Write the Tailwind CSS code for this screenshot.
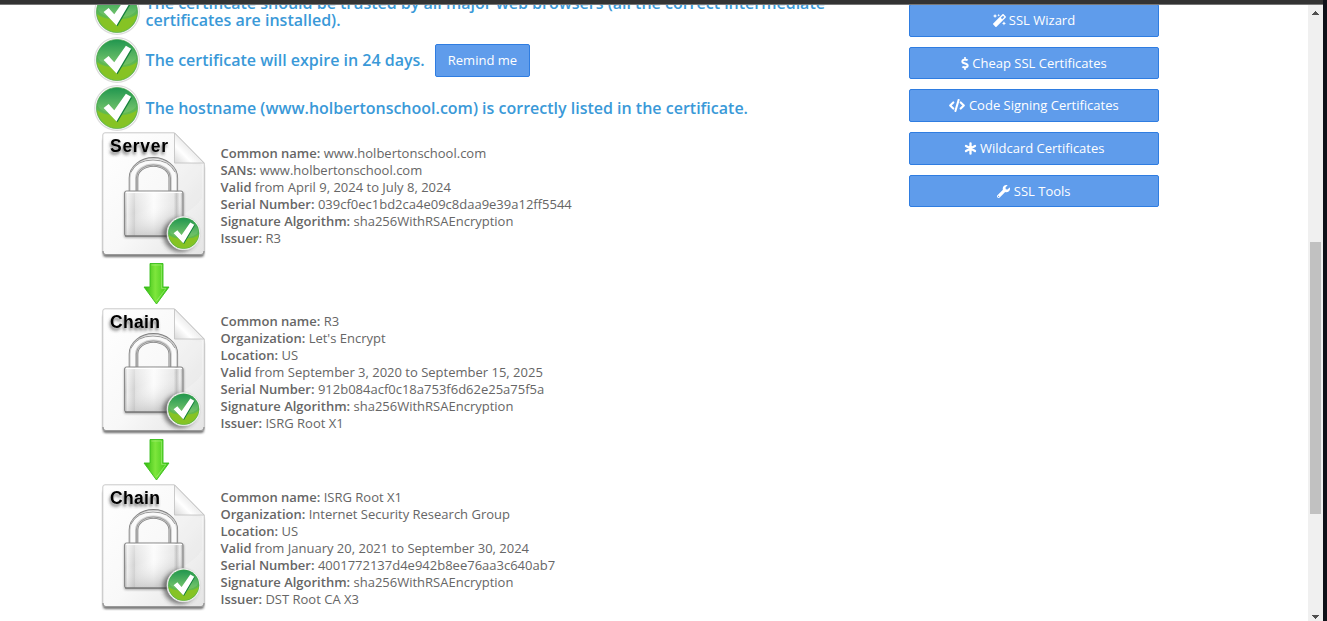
<!DOCTYPE html>
<html lang="en">
<head>
<meta charset="utf-8">
<title>SSL Checker</title>
<script src="https://cdn.jsdelivr.net/npm/@tailwindcss/browser@4"></script>
</head>
<body class="flex h-[621px] w-[1327px] overflow-hidden bg-[#0f1119] font-['Open_Sans',sans-serif] text-[13px] leading-[17px] text-[#666]">
<!-- shared symbols -->
<svg class="absolute h-0 w-0" aria-hidden="true">
  <defs>
    <linearGradient id="gDark" x1="0" y1="0" x2="0" y2="1"><stop offset="0" stop-color="#078a3b"/><stop offset=".5" stop-color="#57b657"/><stop offset="1" stop-color="#86c62d"/></linearGradient>
    <linearGradient id="gPaper" x1="0" y1="0" x2="1" y2="1"><stop offset="0" stop-color="#ffffff"/><stop offset=".55" stop-color="#f8f8f8"/><stop offset="1" stop-color="#e4e4e4"/></linearGradient>
    <linearGradient id="gFold" x1="0" y1="1" x2="1" y2="0"><stop offset="0" stop-color="#d8d8d8"/><stop offset=".3" stop-color="#fff"/><stop offset=".5" stop-color="#ededed"/></linearGradient>
    <linearGradient id="gBody" x1="0" y1="0" x2="1" y2="0"><stop offset="0" stop-color="#aaa"/><stop offset=".05" stop-color="#eee"/><stop offset=".17" stop-color="#d2d2d2"/><stop offset=".19" stop-color="#e2e2e2"/><stop offset=".5" stop-color="#fcfcfc"/><stop offset=".84" stop-color="#e8e8e8"/><stop offset=".89" stop-color="#c4c4c4"/><stop offset=".95" stop-color="#f2f2f2"/><stop offset="1" stop-color="#a5a5a5"/></linearGradient>
    <linearGradient id="gShade" x1="0" y1="0" x2=".5" y2="1"><stop offset="0" stop-color="#fff" stop-opacity=".4"/><stop offset=".45" stop-color="#fff" stop-opacity="0"/><stop offset="1" stop-color="#777" stop-opacity=".35"/></linearGradient>
    <linearGradient id="gArrow" x1="0" y1="0" x2="1" y2="0"><stop offset="0" stop-color="#2fb80e"/><stop offset=".45" stop-color="#7ee63c"/><stop offset="1" stop-color="#35c313"/></linearGradient>
    <filter id="blur1" x="-20%" y="-20%" width="140%" height="150%"><feGaussianBlur stdDeviation="1"/></filter>
    <filter id="blur2" x="-30%" y="-30%" width="160%" height="160%"><feGaussianBlur stdDeviation="2.2"/></filter>
    <filter id="labelShadow" x="-20%" y="-20%" width="140%" height="160%"><feDropShadow dx="-1" dy="2.5" stdDeviation="1.4" flood-color="#333" flood-opacity=".7"/></filter>
    <symbol id="check" viewBox="0 0 46 46">
      <circle cx="23" cy="23" r="22.3" fill="#fff" stroke="#dcdcdc" stroke-width="1.2"/>
      <circle cx="23" cy="23" r="20.6" fill="url(#gDark)" stroke="#3fa03a" stroke-width=".6"/>
      <path d="M3.2 20A20 20 0 0 1 42.8 20Q40 28 23 29Q7 28 3.2 20Z" fill="#fff" opacity=".1"/>
      <path d="M3 25A20.2 20.2 0 0 0 43 25Q36 31 23 30Q10 31 3 25Z" fill="#86c324"/>
      <path d="M11 24.2L16 20.6L21.5 27L33 10L38 12.8L23.5 37.3Z" fill="#15803c"/>
      <path d="M9.6 22.9L14.6 19L20.3 25.3L31.9 8.8L37.1 11.7L22.5 36.4Z" fill="#fff"/>
    </symbol>
    <symbol id="document" viewBox="0 0 112 129">
      <path d="M10 4H78L108 34V121Q108 124 105 124H10Q7 124 7 121V7Z" fill="#444" opacity=".8" filter="url(#blur1)" transform="translate(0 1)"/>
      <path d="M9 .8H78.5L108.3 31V120Q108.3 122.6 105.6 122.6H9.4Q6.8 122.6 6.8 120V3Q6.8 .8 9 .8Z" fill="url(#gPaper)" stroke="#c9c9c9" stroke-width="1"/>
      <path d="M7 119Q7 122.6 10 122.6H105Q108 122.6 108 119" fill="none" stroke="#999" stroke-width="1.4"/>
      <path d="M79 5L106 33V66Q93 85 63 90Q80 62 79 5Z" fill="#ddd" opacity=".2"/>
      <path d="M78.5 28Q87 27 108 33L82 25Z" fill="#aaa" opacity=".6" filter="url(#blur1)"/>
      <path d="M78.5 1V31H108Z" fill="url(#gFold)" stroke="#c4c4c4" stroke-width=".9"/>
      <path d="M37.5 61V46A19.8 16 0 0 1 77.3 46V61" fill="none" stroke="#808080" stroke-width="9.6"/>
      <path d="M37.5 61V46A19.8 16 0 0 1 77.3 46V61" fill="none" stroke="#cfcfcf" stroke-width="8"/>
      <path d="M36.8 61V46A20.5 16.7 0 0 1 78 46V61" fill="none" stroke="#fafafa" stroke-width="4.4"/>
      <path d="M40.3 61V46A17 13 0 0 1 74.5 46V61" fill="none" stroke="#999" stroke-width="1"/>
      <path d="M35 40Q41 28 57 28Q73 28 79 40" fill="none" stroke="#999" stroke-width="1"/>
      <rect x="28" y="60" width="60" height="46" rx="2" fill="#444" opacity=".4" filter="url(#blur1)"/>
      <rect x="28.5" y="59" width="58.5" height="45" rx="2" fill="url(#gBody)" stroke="#8a8a8a"/>
      <rect x="29" y="59.5" width="57.5" height="44" rx="1.5" fill="url(#gShade)"/>
      <path d="M29 104H86" stroke="#666"/>
      <path d="M30 60.5H86" stroke="#fff"/>
      <circle cx="84" cy="103" r="17" fill="#333" opacity=".6" filter="url(#blur2)"/>
      <use href="#check" x="70.4" y="84" width="34.5" height="34.5"/>
    </symbol>
    <symbol id="arrow" viewBox="0 0 27 42">
      <path d="M7 .5H20V24H26L13.5 41L1 24H7Z" fill="url(#gArrow)" stroke="#38bd1b" stroke-width=".9"/>
      <path d="M8.4 2H18.6V25.4H23L13.5 38" fill="none" stroke="#b2f38a" stroke-width=".8" opacity=".7"/>
    </symbol>
  </defs>
</svg>

<div class="flex w-[1323px] flex-col">
  <header class="h-[5px] shrink-0 border-b border-[#777] bg-[#333]"></header>
  <div class="flex min-h-0 flex-1">
    <main class="flex flex-1 items-start overflow-hidden bg-white pl-[94px]">
      <section class="-mt-[17px] w-[815px] shrink-0">
        <div class="text-base font-semibold leading-[17px] text-[#3a99d8]">
          <div class="flex h-12 items-center gap-[5.6px]">
            <svg class="size-[46px] shrink-0"><use href="#check"/></svg>
            <p class="whitespace-nowrap">The certificate should be trusted by all major web browsers (all the correct intermediate<br>certificates are installed).</p>
          </div>
          <div class="flex h-12 items-center gap-[5.6px]">
            <svg class="size-[46px] shrink-0"><use href="#check"/></svg>
            <p>The certificate will expire in 24 days.</p>
            <button class="ml-[4.6px] h-[33px] w-[95px] rounded-[2px] border border-[#2f7de1] bg-[#5f9ceb] text-[13px] font-normal text-white">Remind me</button>
          </div>
          <div class="flex h-12 items-center gap-[5.6px]">
            <svg class="size-[46px] shrink-0"><use href="#check"/></svg>
            <p>The hostname (www.holbertonschool.com) is correctly listed in the certificate.</p>
          </div>
        </div>

        <div class="flex h-44 items-start pl-0.5">
          <div class="w-[124.5px] shrink-0">
            <svg class="block h-[129px] w-[112px]" viewBox="0 0 112 129"><use href="#document"/>
              <text x="14" y="19.6" textLength="58" fill="#000" font-family="Liberation Sans" font-weight="bold" font-size="17.5" filter="url(#labelShadow)">Server</text></svg>
            <svg class="ml-[47px] mt-[2px] block h-[42px] w-[27px]"><use href="#arrow"/></svg>
          </div>
          <div class="pt-[13px]">
            <p><b class="font-semibold">Common name:</b> www.holbertonschool.com</p>
            <p><b class="font-semibold">SANs:</b> www.holbertonschool.com</p>
            <p><b class="font-semibold">Valid</b> from April 9, 2024 to July 8, 2024</p>
            <p><b class="font-semibold">Serial Number:</b> 039cf0ec1bd2ca4e09c8daa9e39a12ff5544</p>
            <p><b class="font-semibold">Signature Algorithm:</b> sha256WithRSAEncryption</p>
            <p><b class="font-semibold">Issuer:</b> R3</p>
          </div>
        </div>

        <div class="flex h-44 items-start pl-0.5">
          <div class="w-[124.5px] shrink-0">
            <svg class="block h-[129px] w-[112px]" viewBox="0 0 112 129"><use href="#document"/>
              <text x="14" y="19.6" textLength="50" fill="#000" font-family="Liberation Sans" font-weight="bold" font-size="17.5" filter="url(#labelShadow)">Chain</text></svg>
            <svg class="ml-[47px] mt-[2px] block h-[42px] w-[27px]"><use href="#arrow"/></svg>
          </div>
          <div class="pt-[5px]">
            <p><b class="font-semibold">Common name:</b> R3</p>
            <p><b class="font-semibold">Organization:</b> Let's Encrypt</p>
            <p><b class="font-semibold">Location:</b> US</p>
            <p><b class="font-semibold">Valid</b> from September 3, 2020 to September 15, 2025</p>
            <p><b class="font-semibold">Serial Number:</b> 912b084acf0c18a753f6d62e25a75f5a</p>
            <p><b class="font-semibold">Signature Algorithm:</b> sha256WithRSAEncryption</p>
            <p><b class="font-semibold">Issuer:</b> ISRG Root X1</p>
          </div>
        </div>

        <div class="flex items-start pl-0.5">
          <div class="w-[124.5px] shrink-0">
            <svg class="block h-[129px] w-[112px]" viewBox="0 0 112 129"><use href="#document"/>
              <text x="14" y="19.6" textLength="50" fill="#000" font-family="Liberation Sans" font-weight="bold" font-size="17.5" filter="url(#labelShadow)">Chain</text></svg>
          </div>
          <div class="pt-[5px]">
            <p><b class="font-semibold">Common name:</b> ISRG Root X1</p>
            <p><b class="font-semibold">Organization:</b> Internet Security Research Group</p>
            <p><b class="font-semibold">Location:</b> US</p>
            <p><b class="font-semibold">Valid</b> from January 20, 2021 to September 30, 2024</p>
            <p><b class="font-semibold">Serial Number:</b> 4001772137d4e942b8ee76aa3c640ab7</p>
            <p><b class="font-semibold">Signature Algorithm:</b> sha256WithRSAEncryption</p>
            <p><b class="font-semibold">Issuer:</b> DST Root CA X3</p>
          </div>
        </div>
      </section>

      <aside class="-mt-px flex w-[250px] flex-col gap-[10.07px] text-white">
        <a class="flex h-[32.6px] items-center justify-center gap-[3px] rounded-[2px] border border-[#2f7de1] bg-[#5f9ceb]">
          <svg class="size-[13px]" viewBox="0 0 512 512" fill="currentColor"><path d="M224 96l16-32 32-16-32-16-16-32-16 32-32 16 32 16 16 32zM80 160l26.66-53.33L160 80l-53.34-26.67L80 0 53.34 53.33 0 80l53.34 26.67L80 160zm352 128l-26.66 53.33L352 368l53.34 26.67L432 448l26.66-53.33L512 368l-53.34-26.67L432 288zm70.62-193.77L417.77 9.38C411.53 3.12 403.34 0 395.15 0c-8.19 0-16.38 3.12-22.63 9.38L9.38 372.52c-12.5 12.5-12.5 32.76 0 45.25l84.85 84.85c6.25 6.25 14.44 9.37 22.62 9.37 8.19 0 16.38-3.12 22.63-9.37l363.14-363.15c12.5-12.48 12.5-32.75 0-45.24zM359.45 203.46l-50.91-50.91 86.6-86.6 50.91 50.91-86.6 86.6z"/></svg>
          SSL Wizard</a>
        <a class="flex h-[32.6px] items-center justify-center gap-[3px] rounded-[2px] border border-[#2f7de1] bg-[#5f9ceb] pt-px">
          <svg class="h-[13px] w-[8px]" viewBox="0 0 288 512" fill="currentColor"><path d="M209.2 233.4l-108-31.6C88.7 198.2 80 186.5 80 173.5c0-16.3 13.2-29.5 29.5-29.5h66.3c12.2 0 24.2 3.7 34.2 10.5 6.1 4.1 14.3 3.1 19.5-2l34.8-34c7.1-6.9 6.1-18.4-1.8-24.5C238 74.8 207.4 64.1 176 64V16c0-8.8-7.2-16-16-16h-32c-8.8 0-16 7.2-16 16v48h-2.5C45.8 64-5.4 118.7.5 183.6c4.2 46.1 39.4 83.6 83.8 96.6l102.5 30c12.5 3.7 21.2 15.3 21.2 28.3 0 16.3-13.2 29.5-29.5 29.5h-66.3C100 368 88 364.3 78 357.5c-6.1-4.1-14.3-3.1-19.5 2l-34.8 34c-7.1 6.9-6.1 18.4 1.8 24.5 24.5 19.2 55.1 29.9 86.5 30v48c0 8.8 7.2 16 16 16h32c8.8 0 16-7.2 16-16v-48.2c46.6-.9 90.3-28.6 105.7-72.7 21.5-61.6-14.6-124.8-72.5-141.7z"/></svg>
          Cheap SSL Certificates</a>
        <a class="flex h-[32.6px] items-center justify-center gap-[3.6px] rounded-[2px] border border-[#2f7de1] bg-[#5f9ceb]">
          <svg class="h-[13px] w-[16px]" viewBox="0 0 16 13" fill="none" stroke="currentColor" stroke-width="2.1" stroke-linejoin="round" stroke-linecap="round"><path d="M4.3 3.4L1.2 6.5L4.3 9.6M11.7 3.4L14.8 6.5L11.7 9.6M9.6 1L6.4 12"/></svg>
          Code Signing Certificates</a>
        <a class="flex h-[32.6px] items-center justify-center gap-[3.4px] rounded-[2px] border border-[#2f7de1] bg-[#5f9ceb]">
          <svg class="size-[13px]" viewBox="0 0 13 13" fill="none" stroke="currentColor" stroke-width="2.3" stroke-linecap="round"><path d="M6.5 1.3V11.7M2 3.9L11 9.1M11 3.9L2 9.1"/></svg>
          Wildcard Certificates</a>
        <a class="flex h-[32.6px] items-center justify-center gap-[3.4px] rounded-[2px] border border-[#2f7de1] bg-[#5f9ceb] pt-px">
          <svg class="size-[13px]" viewBox="0 0 512 512" fill="currentColor"><path d="M507.73 109.1c-2.24-9.03-13.54-12.09-20.12-5.51l-74.36 74.36-67.88-11.31-11.31-67.88 74.36-74.36c6.62-6.62 3.43-17.9-5.66-20.16-47.38-11.74-99.55.91-136.58 37.93-39.64 39.64-50.55 97.1-34.05 147.2L18.74 402.76c-24.99 24.99-24.99 65.51 0 90.5 24.99 24.99 65.51 24.99 90.5 0l213.21-213.21c50.12 16.71 107.47 5.68 147.37-34.22 37.07-37.07 49.7-89.32 37.91-136.73zM64 472c-13.25 0-24-10.75-24-24 0-13.26 10.75-24 24-24s24 10.74 24 24c0 13.25-10.75 24-24 24z"/></svg>
          SSL Tools</a>
      </aside>
    </main>
    <!-- scrollbar -->
    <div class="flex w-[15px] shrink-0 flex-col items-center bg-[#f0f0f0] pb-[2px] pt-[6px]">
      <svg class="h-1 w-[7px]" viewBox="0 0 7 4" fill="#505050" shape-rendering="crispEdges"><path d="M3 0H4V1H5V2H6V3H7V4H0V3H1V2H2V1H3Z"/></svg>
      <div class="mt-[227px] h-[272px] w-[11px] bg-[#c1c1c1]"></div>
      <svg class="mt-auto h-1 w-[7px]" viewBox="0 0 7 4" fill="#505050" shape-rendering="crispEdges"><path d="M0 0H7V1H6V2H5V3H4V4H3V3H2V2H1V1H0Z"/></svg>
    </div>
  </div>
</div>
</body>
</html>
